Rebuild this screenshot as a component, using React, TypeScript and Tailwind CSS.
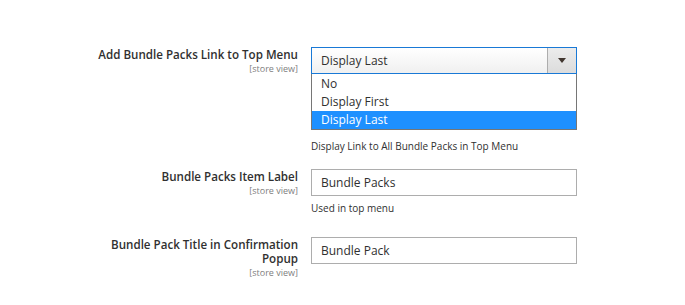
import React from 'react';

const font = { fontFamily: '"Open Sans", "Liberation Sans", sans-serif' };

function Label({ lines }: { lines: string[] }) {
    return (
        <div className="w-[210px] shrink-0 text-right pt-[1px]">
            {lines.map((l) => (
                <div key={l} className="text-[11.6px] leading-[14px] font-semibold text-[#303030]">{l}</div>
            ))}
            <div className="text-[9px] leading-[11px] mt-[1px] text-[#808080]">[store view]</div>
        </div>
    );
}

export default function App() {
    const options = ['No', 'Display First', 'Display Last'];

    return (
        <div className="w-[685px] h-[305px] bg-white overflow-hidden pt-[47px] pl-[88px]" style={font}>
            <div className="flex gap-[13px]">
                <Label lines={['Add Bundle Packs Link to Top Menu']} />
                <div className="w-[266px]">
                    <div className="h-[27px] flex border border-[#1979d6] bg-gradient-to-b from-white to-[#f0f0f0]">
                        <div className="flex-1 pl-[9px] text-[12px] leading-[26px] text-[#303030]">Display Last</div>
                        <div className="w-[29px] flex items-center justify-center border-l border-[#adadad] bg-gradient-to-b from-[#ececec] to-[#dcdcdc]">
                            <svg width="8" height="5" viewBox="0 0 8 5">
                                <path d="M0 0h8L4 5z" fill="#41362f" />
                            </svg>
                        </div>
                    </div>
                    <div className="border border-t-0 border-[#767676] h-[56px] flex flex-col justify-end">
                        {options.map((o) => (
                            <div
                                key={o}
                                className={
                                    o === 'Display Last'
                                        ? 'h-[18px] pl-[9px] text-[12px] leading-[18px] bg-[#1e90ff] text-white'
                                        : 'h-[18px] pl-[9px] text-[12px] leading-[18px] text-[#303030]'
                                }
                            >
                                {o}
                            </div>
                        ))}
                    </div>
                    <div className="mt-[9px] text-[10px] leading-[14px] text-[#303030]">Display Link to All Bundle Packs in Top Menu</div>
                </div>
            </div>

            <div className="flex gap-[13px] mt-[16px]">
                <Label lines={['Bundle Packs Item Label']} />
                <div className="w-[266px]">
                    <div className="h-[27px] border border-[#adadad] pl-[9px] text-[12px] leading-[26px] text-[#303030]">Bundle Packs</div>
                    <div className="mt-[5px] text-[10px] leading-[14px] text-[#303030]">Used in top menu</div>
                </div>
            </div>

            <div className="flex gap-[13px] mt-[22px]">
                <Label lines={['Bundle Pack Title in Confirmation', 'Popup']} />
                <div className="w-[266px]">
                    <div className="h-[27px] border border-[#adadad] pl-[9px] text-[12px] leading-[26px] text-[#303030]">Bundle Pack</div>
                </div>
            </div>
        </div>
    );
}
